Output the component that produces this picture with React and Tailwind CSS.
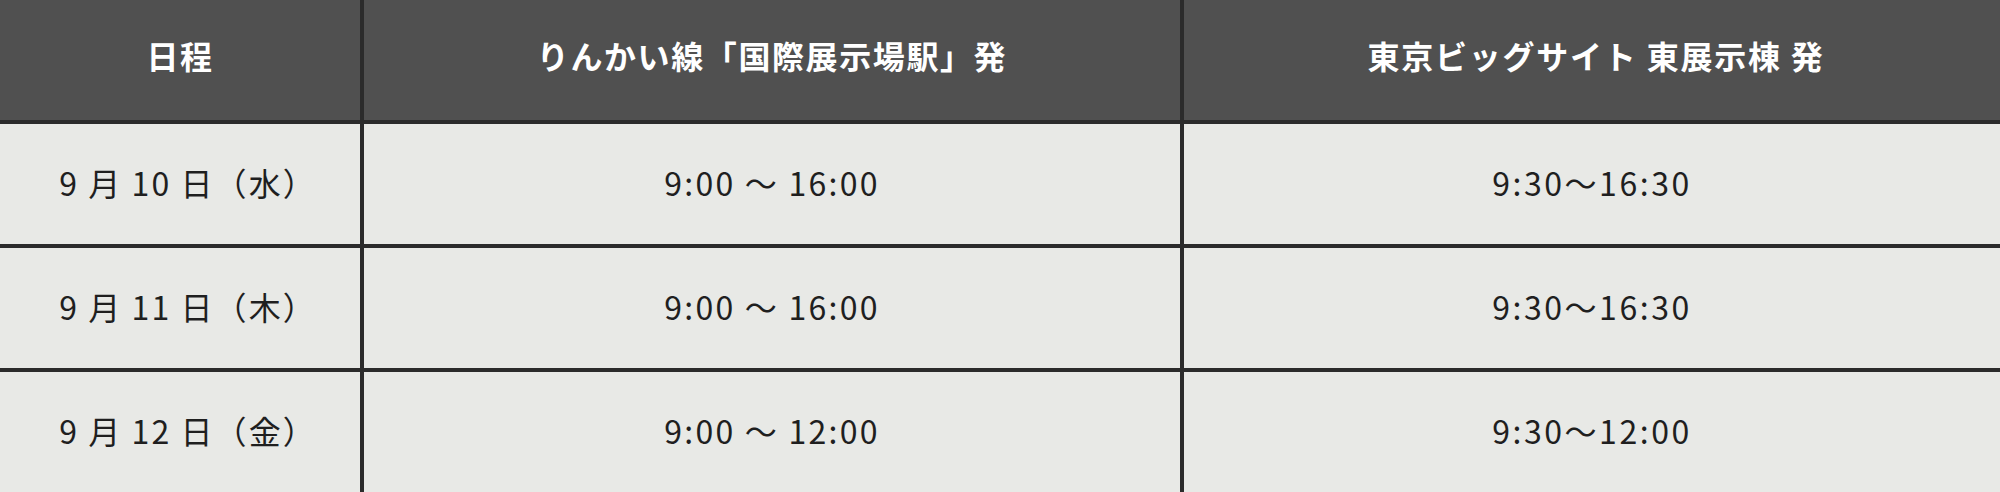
// App.jsx

const rows = [
  { date: "9 月 10 日（水）", rinkai: "9:00 〜 16:00", bigsight: "9:30〜16:30" },
  { date: "9 月 11 日（木）", rinkai: "9:00 〜 16:00", bigsight: "9:30〜16:30" },
  { date: "9 月 12 日（金）", rinkai: "9:00 〜 12:00", bigsight: "9:30〜12:00" },
];

export default function App() {
  return (
    <div
      className="w-[2000px] h-[492px] overflow-hidden bg-[#2b2b2b]"
      style={{ fontFamily: '"Noto Sans CJK JP", "Noto Sans", sans-serif' }}
    >
      <div className="grid grid-cols-[360px_1fr_1fr] gap-[4px]">
        {/* Header */}
        <div className="h-[120px] pb-[11px] flex items-center justify-center bg-[#505050] text-white text-[32px] font-bold tracking-[0.05em] leading-none">
          日程
        </div>
        <div className="h-[120px] pb-[11px] flex items-center justify-center bg-[#505050] text-white text-[32px] font-bold tracking-[0.05em] leading-none">
          りんかい線「国際展示場駅」発
        </div>
        <div className="h-[120px] pb-[11px] pl-[8px] flex items-center justify-center bg-[#505050] text-white text-[32px] font-bold tracking-[0.055em] leading-none">
          東京ビッグサイト 東展示棟 発
        </div>

        {/* Body */}
        {rows.map((r) => (
          <div key={r.date} className="contents">
            <div className="h-[120px] pb-[4px] pl-[16px] flex items-center justify-center bg-[#e8e9e6] text-[#1f1f1f] text-[32px] tracking-[0.065em] leading-none">
              {r.date}
            </div>
            <div className="h-[120px] pb-[4px] flex items-center justify-center bg-[#e8e9e6] text-[#1f1f1f] text-[32px] tracking-[0.07em] leading-none">
              {r.rinkai}
            </div>
            <div className="h-[120px] pb-[4px] flex items-center justify-center bg-[#e8e9e6] text-[#1f1f1f] text-[32px] tracking-[0.08em] leading-none">
              {r.bigsight}
            </div>
          </div>
        ))}
      </div>
    </div>
  );
}
